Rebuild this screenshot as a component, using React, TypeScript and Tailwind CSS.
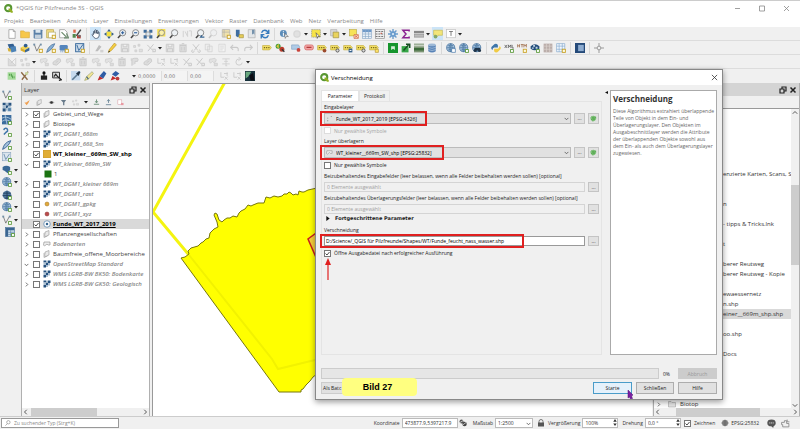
import type { ReactNode } from "react";

const badge = <rect x="10" y="10" width="5" height="5" fill="#fffbe0" stroke="#c9a227" strokeWidth="1.4" />;
const greenBadge = <rect x="10.5" y="10.5" width="4.5" height="4.5" fill="#fff" stroke="#5c9a3c" strokeWidth="1.4" />;
const lens = <circle cx="9" cy="6" r="5" fill="#eef2f5" stroke="#888" strokeWidth="1.5" />;
const handle = <path d="M5.5 10L1.5 14.5" stroke="#444" strokeWidth="2.4" />;
const nodes = (
  <>
    <path d="M2 2L6 13L12 2" fill="none" stroke="#777" strokeWidth="1.4" />
    <rect x="0.5" y="1" width="3" height="3" fill="#7390a8" />
    <rect x="11" y="1" width="3" height="3" fill="#7390a8" />
  </>
);
const globe = (
  <>
    <circle cx="7.5" cy="7.5" r="6.5" fill="#a9c4de" stroke="#44729d" strokeWidth="1.2" />
    <path d="M1 7.5H14M7.5 1V14M3 3.5Q7.5 6 12 3.5M3 11.5Q7.5 9 12 11.5M7.5 1Q2.5 7.5 7.5 14Q12.5 7.5 7.5 1" fill="none" stroke="#44729d" />
  </>
);
const tag = (
  <>
    <path d="M1 4H12L15 7.5L12 11H1Z" fill="#f2df63" stroke="#c2aa3b" />
    <path d="M3 7.5H5M6.5 7.5H8.5M10 7.5H12" stroke="#77671c" strokeWidth="2" />
  </>
);
const raster = (
  <>
    <path d="M1 1h5v4h-5zM10 1h5v5h-5zM6 5h4v5h-4zM1 10h5v5h-5z" fill="#27527f" />
    <path d="M6 1h4v4h-4zM1 5h5v5h-5zM10 6h4v5h-4zM6 10h4v4h-4z" fill="#a8bdd0" />
  </>
);

const icons: Record<string, ReactNode> = {
  file: <path d="M3 1H10L13 4V15H3ZM10 1V4H13" fill="#fff" stroke="#888" />,
  folder: <path d="M1 3H6L8 5H15V14H1Z" fill="#f7c74a" stroke="#d9a62e" />,
  save: <><rect x="1" y="1" width="14" height="14" rx="1" fill="#5a80a8" /><rect x="4" y="1" width="8" height="5" fill="#dce6ee" /><rect x="3" y="9" width="10" height="6" fill="#c3d0dc" /></>,
  layoutNew: <><path d="M1 1H12V14H1Z" fill="#f1dc85" stroke="#b69d3b" /><path d="M4 5H15V14H4Z" fill="#fff" stroke="#a8a25f" />{badge}</>,
  layoutManage: <><path d="M1 1H9L13 5V14H1Z" fill="#fff" stroke="#888" /><path d="M4 5L12 13M12 7L15 14L8 14" stroke="#6d8c6e" strokeWidth="2" fill="none" /></>,
  style: <><path d="M2 1H6V6H2Z" fill="#dd6b4d" /><path d="M14 1L7 11" stroke="#444" strokeWidth="2.4" /><path d="M1 8H6V14H1Z" fill="#53884d" /><path d="M8 10H14V15H8Z" fill="#b6413a" /><circle cx="12" cy="11" r="2" fill="#6d6d6d" /></>,
  hand: <path d="M4 9V4Q5 2.500 6 4V7V2Q7.500 .5 8.500 2V7V2.500Q10 1 11 3V8V5Q13 4 13 6V11Q12 15 9 15H7Q5 15 1.500 9Q2 7.500 4 9Z" fill="#fff" stroke="#30445c" strokeWidth="1.2" />,
  panSel: <><path d="M4 4h8v8H4z" fill="#f4e13f" /><path d="M8 0l3 4H5zM8 16l3-4H5zM0 8l4-3v6zM16 8l-4-3v6z" fill="#365f88" /></>,
  zoomIn: <>{lens}{handle}<path d="M9 3.500V8.500M6.500 6H11.500" stroke="#2e5f9b" strokeWidth="1.800" /></>,
  zoomOut: <>{lens}{handle}<path d="M6.500 6H11.500" stroke="#2e5f9b" strokeWidth="1.800" /></>,
  zoomFull: <><path d="M1 1h5v5H1zM10 1h5v5h-5zM1 10h5v5H1zM10 10h5v5h-5z" fill="#3e6c9c" /><circle cx="8" cy="8" r="3.500" fill="#dbe6ef" stroke="#777" /></>,
  zoomSel: <><rect x="2" y="0" width="13" height="12" fill="#f5df4d" /><circle cx="9" cy="6" r="4.500" fill="#faf0a8" stroke="#888" strokeWidth="1.400" />{handle}</>,
  zoomLayer: <>{lens}{handle}</>,
  dimZoom: <g opacity=".25">{lens}{handle}</g>,
  dimNative: <path d="M2 3V13M5 4L9 12V3M11 3H15V12" fill="none" stroke="#d2d2d2" strokeWidth="1.600" />,
  zoomLast: <>{lens}{handle}<path d="M15 13H9L11 10" fill="none" stroke="#376592" strokeWidth="2" /></>,
  mapNew: <><path d="M2 1H14V13H2Z" fill="#f0e2ae" stroke="#aaa" /><path d="M5 1V13M2 5H14" stroke="#aaa" />{badge}</>,
  map3d: <><path d="M3 1H9V11L6 13L3 11Z" fill="#3f6da0" /><path d="M8 9H15V14H8Z" fill="#e5cd58" stroke="#a38e33" /></>,
  bookmark: <><path d="M2 1H13V14H2Z" fill="#e3e6e8" stroke="#aaa" /><path d="M8 1H12V9L10 7L8 9Z" fill="#7693ad" /></>,
  refresh: <path d="M13.500 7Q12 2 7.500 2Q4 2 2.500 6M14 1V7H9M2.500 9Q4 14 8.500 14Q12 14 13.500 10M2 15V9H7" fill="none" stroke="#377bbd" strokeWidth="2.200" />,
  identify: <><circle cx="7" cy="7" r="5.500" fill="#5b8cb9" /><path d="M7 3V4.500M7 6V11" stroke="#fff" strokeWidth="1.600" /><path d="M9 7L15 12L11.500 12L10 15Z" fill="#fff" stroke="#666" /></>,
  dimGear: <g opacity=".2"><circle cx="8" cy="8" r="5" fill="#aaa" stroke="#777" strokeWidth="2" /></g>,
  select: <><rect x="1" y="1" width="14" height="12" fill="#f7e448" stroke="#888" strokeDasharray="2 1" /><path d="M8 6L14 12L11 12L10 15Z" fill="#fff" stroke="#444" /></>,
  selectForm: <><path d="M1 1H11V11H1Z" fill="#d8d8d8" stroke="#aaa" /><path d="M5 5H14V14H5Z" fill="#e9d35d" stroke="#998a3c" /></>,
  deselect: <><rect x="1" y="1" width="11" height="10" fill="#f7e258" stroke="#b9a93d" /><path d="M8 9H15V15H8Z" fill="#fbe0ce" stroke="#cd5d38" /><path d="M9 10L14 14M14 10L9 14" stroke="#d04b2d" /></>,
  table: <><rect x="1" y="1" width="14" height="14" fill="#e9f1f8" stroke="#89a8c7" /><rect x="1" y="1" width="14" height="4" fill="#6e9aca" /><path d="M1 8H15M1 12H15M5.500 1V15M10.500 1V15" stroke="#89a8c7" /></>,
  tableGreen: <><rect x="1" y="1" width="14" height="14" fill="#c9dbea" stroke="#4a7299" /><path d="M1 1H15V5H5V15H1Z" fill="#3b6691" /><path d="M5 8.500H15M5 12H15M9 5V15" stroke="#5b84aa" />{greenBadge}</>,
  calc: <><rect x="1" y="1" width="14" height="14" fill="#eee" stroke="#888" /><path d="M1 4H15M1 8H15M1 12H15" stroke="#777" strokeDasharray="3 1.500" strokeWidth="1.600" /><path d="M9 6h2v2H9z" fill="#c54" /></>,
  gear: <><path d="M8 0V16M0 8H16M2.500 2.500L13.500 13.500M13.500 2.500L2.500 13.500" stroke="#6a9ccd" strokeWidth="2.200" /><circle cx="8" cy="8" r="4.500" fill="#6a9ccd" /><circle cx="8" cy="8" r="1.800" fill="#dceaf5" /></>,
  sigma: <path d="M13 4V2H3L8 8L3 14H13V12" fill="none" stroke="#8b2391" strokeWidth="2.400" />,
  ruler: <><rect x="0" y="3" width="16" height="4" fill="#888" /><rect x="0" y="9" width="16" height="4" fill="#bbb" stroke="#888" /></>,
  tip: <><path d="M1 2H15V10H8L5 14V10H1Z" fill="#f3e57a" stroke="#c6b54b" /><circle cx="4" cy="12" r="3" fill="#84a869" /></>,
  text: <><rect x="1" y="1" width="14" height="13" fill="#fff" stroke="#bbb" /><path d="M5 4H11M8 4V11" stroke="#777" strokeWidth="1.500" /></>,
  source: <><path d="M1 2L10 1L14 9L5 12Z" fill="#325f91" /><path d="M5 6L14 5L15 13L7 15Z" fill="#4c82b6" /><path d="M1 8L6 9V14L2 13Z" fill="#d8b23b" /></>,
  gpkg: <><path d="M1 7L8 4L15 7L8 11Z" fill="#f5d650" /><path d="M1 7L8 11V15L1 12Z" fill="#d9ae2c" /><path d="M8 11L15 7V12L8 15Z" fill="#3a6795" /><circle cx="9" cy="4" r="3" fill="#2f5c8e" /></>,
  shp: <>{nodes}{badge}</>,
  shpGreen: <>{nodes}{greenBadge}</>,
  feather: <><path d="M1 15Q3 4 14 1Q11 10 1 15" fill="#85aed3" stroke="#315f90" />{badge}</>,
  featherDark: <><path d="M1 15Q3 4 14 1Q11 10 1 15" fill="#a3c1dc" stroke="#315f90" strokeWidth="1.400" />{greenBadge}</>,
  memory: <><rect x="1" y="3" width="13" height="9" rx="2" fill="#5485bd" /><path d="M3 12V15M6 12V15M9 12V15" stroke="#5485bd" />{badge}</>,
  mesh: <><rect x="1" y="1" width="13" height="13" fill="#cddceb" stroke="#396a9c" strokeWidth="1.500" /><path d="M3 3L6 12L13 2" stroke="#396a9c" fill="none" strokeWidth="1.500" />{badge}</>,
  meshLight: <><rect x="1" y="1" width="13" height="13" fill="#dbe5ee" stroke="#8aa5be" /><path d="M3 3L6 12L12 3" stroke="#6c8fb0" fill="none" strokeWidth="1.400" />{greenBadge}</>,
  pencilDim: <><path d="M2 13L8 3L12 6L6 13Z" fill="#bdbdbd" /><path d="M10 11H15V15H10Z" fill="#d2d2d2" /></>,
  pencil: <><path d="M2 15L4 10L12 0L15 3L7 12Z" fill="#f5cf42" stroke="#b78e25" /><path d="M2 15L3 12L5 14Z" fill="#333" /></>,
  dimSave: <path d="M2 2H14V14H2ZM5 2V6H11V2M4 14V9H12V14" fill="#e3e3e3" stroke="#c8c8c8" strokeWidth="1.400" />,
  dimPoints: <path d="M1 4H4V7H1ZM8 2H11V5H8ZM3 11H6V14H3ZM10 10H15V14H10Z" fill="#e0e0e0" stroke="#c8c8c8" />,
  dimTool: <path d="M2 3L13 14M12 2L3 13M10 10H15V14H10" fill="none" stroke="#c9c9c9" strokeWidth="1.600" />,
  dimTrash: <path d="M3 4H13V14H3ZM2 3H14M6 1H10M6 6V12M10 6V12" fill="#dedede" stroke="#c8c8c8" strokeWidth="1.400" />,
  dimCut: <path d="M3 2L11 12M13 2L5 12M3 11A2 2 0 1 0 5 13M11 13A2 2 0 1 0 13 11" fill="none" stroke="#c8c8c8" strokeWidth="1.500" />,
  dimCopy: <path d="M2 2H9V11H2ZM6 5H13V14H6Z" fill="#eee" stroke="#ccc" />,
  dimPaste: <path d="M3 2H13V14H3ZM5 5H11M5 8H11M5 11H9" fill="#f4f4f4" stroke="#ccc" />,
  undo: <path d="M5 3L1 7L5 11M1 7H10Q14 7 13 13" fill="none" stroke="#c9c9c9" strokeWidth="1.800" />,
  redo: <path d="M11 3L15 7L11 11M15 7H6Q2 7 3 13" fill="none" stroke="#c9c9c9" strokeWidth="1.800" />,
  dimMesh: <path d="M2 2V14H14L2 2M14 2V14M14 2L6 10" fill="#ddd" stroke="#ccc" strokeWidth="1.300" />,
  dimShape: <><path d="M2 7Q1 2 6 3L11 2Q15 4 12 8Q8 10 7 7L4 10Z" fill="#e2e2e2" stroke="#c8c8c8" /><path d="M10 10H15V14H10Z" fill="#ddd" stroke="#c8c8c8" /></>,
  dimRing: <path d="M2 12Q0 7 6 6Q8 1 13 3Q16 7 11 10Q8 15 2 12ZM6 9L10 6" fill="#ddd" stroke="#c8c8c8" strokeWidth="1.300" />,
  dimCurve: <path d="M3 14V5Q3 2 7 2H12Q14 4 12 7H8V11M2 2V6" fill="#ddd" stroke="#c9c9c9" strokeWidth="1.400" />,
  dimSplit: <path d="M3 2V10H8M13 2V8M8 4H14M9 9L14 14M14 9L9 14" fill="none" stroke="#cccccc" strokeWidth="1.500" />,
  dimAlign: <path d="M2 3H14M5 7H11M2 11H14M7 14H10M8 3V14" stroke="#d0d0d0" strokeWidth="1.400" />,
  dimRotate: <path d="M13 9Q13 13 8 13Q3 13 3 8Q3 3 9 3M7 0L11 3L7 6" fill="none" stroke="#cfcfcf" strokeWidth="1.600" />,
  label: tag,
  labelPin: <>{tag}<circle cx="12" cy="12" r="3" fill="#9c4b2d" /></>,
  labelMove: <>{tag}<path d="M9 9H15V15H9Z" fill="#37628d" /><path d="M10.500 12H13.500" stroke="#fff" strokeWidth="1.500" /></>,
  labelRot: <>{tag}<circle cx="12" cy="12" r="2.500" fill="#ddd" stroke="#555" strokeWidth="1.500" /></>,
  labelNew: <>{tag}<path d="M10 10h5v5h-5z" fill="#ffe36b" stroke="#ad8e28" /></>,
  diagram: <><circle cx="5" cy="5" r="4" fill="#3e9a3c" /><circle cx="11" cy="10" r="4" fill="#bb3d2b" /><path d="M2 5L6 9V1Z" fill="#e5c73d" /><path d="M11 10L15 14" stroke="#333" strokeWidth="2" /></>,
  labelBlue: <><path d="M1 3H12L14 7L12 10H1Z" fill="#b0cbe6" stroke="#7d9fc2" /><circle cx="12" cy="11" r="3" fill="#c9443b" /></>,
  labelRed: <><rect x="1" y="3" width="14" height="8" rx="3" fill="#f2a3a3" stroke="#d05c5c" /><path d="M4 7H12" stroke="#b33c3c" strokeWidth="2" /></>,
  green: <><rect x="0" y="0" width="16" height="16" fill="#16952d" /><path d="M5 5H11V11L8 9L5 11Z" fill="#d6efd8" /></>,
  greenUp: <><path d="M1 5H12V15H1Z" fill="#35a546" /><path d="M4 12L12 3M8 2H14V8" fill="none" stroke="#174f23" strokeWidth="2.400" /></>,
  terrain: <><rect x="0" y="1" width="16" height="14" fill="#7d9575" /><path d="M0 4H16" stroke="#c9d2c4" strokeWidth="3" /><path d="M0 10H16" stroke="#3d6b3b" strokeWidth="4" /></>,
  db: <><path d="M2 3V13Q8 17 14 13V3" fill="#5883b7" /><ellipse cx="8" cy="3" rx="6" ry="2.300" fill="#9db8d6" /><path d="M2 7Q8 10 14 7M2 10.500Q8 13.500 14 10.500" fill="none" stroke="#bdd0e5" /></>,
  globe: <>{globe}{greenBadge}</>,
  globeBlue: <>{globe}<path d="M9 9H15V15H9Z" fill="#fff" stroke="#386da3" /></>,
  globeFind: <>{globe}<circle cx="5" cy="12" r="2.500" fill="#203549" /><circle cx="12" cy="12" r="2.500" fill="#203549" /><path d="M4 8H13V12H4Z" fill="#203549" /></>,
  globeDark: <><circle cx="8" cy="8" r="7" fill="#547ba0" /><path d="M2 5H14M1 9H15M4 13H12M8 1V15" stroke="#213f5c" strokeWidth="1.500" />{greenBadge}</>,
  python: <><path d="M4 3Q8 -1 11 3V7H5Q2 8 3 11Q-1 10 1 6Z" fill="#3e76aa" /><path d="M12 13Q8 17 5 13V9H11Q14 8 13 5Q17 6 15 10Z" fill="#f0cb45" /></>,
  xml: <><path d="M1 3L5 8M5 3L1 8M7 8V3L9 6L11 3V8M13 3V8H16" fill="none" stroke="#555" strokeWidth="1.200" />{greenBadge}</>,
  html: <><path d="M1 2V7M4 2V7M1 4.500H4M6 2.500H10M8 2V7M11 7V2L13 5L15 2V7" fill="none" stroke="#9c6a45" strokeWidth="1.200" />{badge}</>,
  checker: <><path d="M1 5Q8 -1 15 5V9Q8 14 1 9Z" fill="#234d7a" /><path d="M5 3H8V6H5ZM9 6H12V9H9ZM3 7H6V9H3Z" fill="#bfd2e4" />{greenBadge}</>,
  gridGrey: <><rect x="1" y="1" width="14" height="14" fill="#bbaeaa" /><path d="M1 5H15M1 10H15M5.500 1V15M10.500 1V15" stroke="#ddd5d1" /></>,
  gridBlue: <><path d="M1 1H14V14H1ZM1 5H14M1 10H14M5 1V14M10 1V14" fill="#f4f9ff" stroke="#7da3ca" />{badge}</>,
  book: <><rect x="0" y="0" width="16" height="16" fill="#254a79" /><rect x="5" y="3" width="9" height="10" fill="#8eacd0" /></>,
  target: <path d="M0 8H5M11 8H16M8 0V5M8 11V16M8 5A3 3 0 1 0 8 11A3 3 0 1 0 8 5" fill="none" stroke="#9b9b9b" strokeWidth="1.600" />,
  plugin: <><path d="M1 2H14V14H1Z" fill="#a7dc9c" /><path d="M3 6H8V10H12" fill="none" stroke="#5ba553" strokeWidth="3" strokeDasharray="2 1" /></>,
  brushes: <><path d="M2 2L12 14M13 1L3 14" stroke="#8d6a46" strokeWidth="2.200" /><path d="M8 2H13V6H8Z" fill="#cbd8a2" /></>,
  weight: <><circle cx="8" cy="3" r="2.500" fill="#111" /><path d="M7 4H9V7H13V14H3V7H7Z" fill="#222" /></>,
  photo: <><path d="M1 2H12V11H1Z" fill="#ddd" stroke="#333" strokeWidth="1.600" /><path d="M3 9L6 5L9 9M8 8L15 14L11 15" stroke="#222" strokeWidth="1.800" fill="none" /></>,
  dropper: <><rect x="0" y="0" width="15" height="15" fill="#c5d9ed" /><path d="M2 14L10 6" stroke="#5b7891" strokeWidth="2.600" /><path d="M8 4L12 8L15 2L13 0Z" fill="#203142" /></>,
  marker: <><path d="M1 15L4 9L13 1L15 4L7 13Z" fill="#f1e594" stroke="#9c9f68" /><path d="M4 9L7 13" stroke="#47667f" strokeWidth="2" /></>,
  redpen: <><path d="M1 15L4 8L10 12Z" fill="#c12b2b" /><path d="M4 8L11 0L15 4L10 12Z" fill="#2f5da6" /></>,
  redpen2: <><path d="M1 15L4 8L10 12Z" fill="#c12b2b" /><path d="M3 5L9 0L15 4L9 9Z" fill="#2f5da6" /><circle cx="12" cy="12" r="3" fill="#bb3b3b" /></>,
  bird: <><rect x="0" y="0" width="16" height="16" fill="#17313b" /><path d="M1 1H10L5 9L1 12Z" fill="#68a77e" /><path d="M7 7L13 3L15 15H9Z" fill="#0b0d13" /></>,
  raster,
  rasterBlue: <>{raster}<path d="M9 9h6v6H9z" fill="#5480a8" stroke="#d6e3ee" /></>,
  meshBlue: <><rect x="0" y="0" width="15" height="15" fill="#3c6d9e" /><path d="M0 5Q7 1 15 7M0 10Q8 5 15 12M5 0L8 15" stroke="#bdd1e3" fill="none" strokeWidth="1.300" />{greenBadge}</>,
  comma: <><path d="M3 5A3 3 0 1 1 7 8L3 12" fill="none" stroke="#3f75a9" strokeWidth="2.400" />{greenBadge}</>,
  dbBlue: <><path d="M1 3Q7 -1 13 3V8L9 13L4 9L1 8Z" fill="#396895" />{greenBadge}</>,
  open: <path d="M1 8H5L13 2L10 9L6 14Z" fill="#efa052" />,
  group: <path d="M4 4L12 1V10L4 13ZM2 6V15L9 12" fill="#e9e9e9" stroke="#999" strokeWidth="1.200" />,
  eye: <><path d="M1 8Q8 1 15 8Q8 14 1 8" fill="#aaa" /><circle cx="8" cy="8" r="3" fill="#333" /></>,
  filter: <path d="M2 2H14L10 8V14H7V8Z" fill="#697b8b" />,
  expand: <path d="M8 1V8M5 5L8 9L11 5M2 12H14" fill="none" stroke="#668c74" strokeWidth="2" />,
  collapse: <path d="M8 9V2M5 5L8 1L11 5M2 13H14" fill="none" stroke="#6c8798" strokeWidth="2" />,
  remove: <><rect x="2" y="2" width="9" height="10" fill="#fff" stroke="#d48a93" /><rect x="9" y="9" width="6" height="5" fill="#e99aa3" /></>,
  polygon: <path d="M2 4H14V10H10L8 8L3 12L1 10Z" fill="#eee" stroke="#888" strokeWidth="1.200" />,
  yellowBox: <rect x="0" y="0" width="16" height="16" fill="#e0ad35" stroke="#b98c25" />,
  greenBox: <rect x="1" y="1" width="14" height="14" fill="#1b7312" />,
  orangeDot: <circle cx="8" cy="8" r="4" fill="#e1a93a" stroke="#9b7124" />,
  redDot: <circle cx="8" cy="8" r="4" fill="#bb4a4a" stroke="#873232" />,
  pointRing: <><circle cx="8" cy="8" r="6.500" fill="#fff" stroke="#4d7ca8" strokeWidth="1.400" /><circle cx="8" cy="8" r="2.500" fill="#35648f" /></>,
  points: <path d="M3 6h2v2H3zM3 12h2v2H3zM11 2h2v2h-2z" fill="#777" />,
  cycle: <><path d="M1 6Q3 1 9 2L14 4V9L11 13L6 15L2 11Z" fill="#5fae59" /><path d="M4 9A4 4 0 0 1 11 5M12 7A4 4 0 0 1 5 11" fill="none" stroke="#a5d69f" strokeWidth="1.200" /></>,
  mouse: <><circle cx="5" cy="5" r="4" fill="#555" /><circle cx="11" cy="10" r="4.500" fill="#444" /><path d="M2 7L10 2M6 13L14 7" stroke="#eee" strokeWidth="1.400" /></>,
  lock: <><path d="M4 8V5Q4 1 8 1Q12 1 12 5V8" fill="none" stroke="#777" strokeWidth="2" /><rect x="2" y="7" width="12" height="8" fill="#555" /></>,
  crs: <><circle cx="8" cy="8" r="6" fill="#888" /><path d="M0 8H16M8 1V15M3 4H13M3 12H13" stroke="#555" /></>,
  bubble: <><ellipse cx="8" cy="7" rx="7.500" ry="6" fill="#555" /><path d="M7 12L11 16L12 11Z" fill="#555" /><path d="M4 7H12" stroke="#ddd" strokeWidth="1.600" strokeDasharray="2 1" /></>,
  plug: <path d="M1 6H6V3H10V8H14V14H3V10H1ZM11 1V5H15" fill="none" stroke="#888" strokeWidth="1.500" />,
  search: <><circle cx="9" cy="6" r="4.500" fill="none" stroke="#777" strokeWidth="1.500" /><path d="M6 10L1 15" stroke="#777" strokeWidth="1.500" /></>,
  folderDim: <path d="M1 3H6L8 5H15V14H1Z" fill="#e6e6e6" stroke="#999" />,
};

function Icon({ name, className = "size-[10px]" }: { name: string; className?: string }) {
  return <svg viewBox="0 0 16 16" className={`shrink-0 ${className}`}>{icons[name]}</svg>;
}

function QgisLogo() {
  return (
    <svg viewBox="0 0 16 16" className="size-[9px] shrink-0">
      <circle cx="7.500" cy="7.500" r="5.500" fill="none" stroke="#589632" strokeWidth="3.600" />
      <path d="M8 8H11L15.500 12.500V15.500H12.500L8 11Z" fill="#93b023" />
    </svg>
  );
}

// "|" draws a separator, "v" a drop-down arrow, "_" a thin spacer, a leading "*" marks a pressed tool
function Tools({ items }: { items: string }) {
  return (
    <div className="flex items-center gap-[2px]">
      {items.split(" ").map((item, i) => {
        if (item === "|") return <span key={i} className="flex h-[12px] w-1 justify-center"><span className="w-px bg-[#d8d8d8]" /></span>;
        if (item === "_") return <span key={i} className="w-px" />;
        if (item === "v") return <Arrow key={i} />;
        const pressed = item.startsWith("*");
        const name = pressed ? item.slice(1) : item;
        return (
          <button key={i} aria-label={name} className={`flex h-[13px] w-[11px] shrink-0 items-center justify-center ${pressed ? "bg-[#cce4f7]" : ""}`}>
            <Icon name={name} />
          </button>
        );
      })}
    </div>
  );
}

function Arrow() {
  return <svg viewBox="0 0 4 4" className="size-1 shrink-0"><path d="M0 1H4L2 3.500Z" fill="#222" /></svg>;
}

function Chevron({ dir, className = "size-[6px]" }: { dir: "down" | "right" | "left" | "up"; className?: string }) {
  const d = { down: "M1 3L4 6L7 3", right: "M3 1L6 4L3 7", left: "M5 1L2 4L5 7", up: "M1 5L4 2L7 5" }[dir];
  return <svg viewBox="0 0 8 8" className={`shrink-0 ${className}`}><path d={d} fill="none" stroke="#555" strokeWidth="1.300" /></svg>;
}

function Check({ label, checked, disabled }: { label?: string; checked?: boolean; disabled?: boolean }) {
  return (
    <label className={`flex items-center gap-[3px] ${disabled ? "text-[#a5a5a5]" : ""}`}>
      <span className="relative flex">
        <input type="checkbox" defaultChecked={checked} disabled={disabled} aria-label={label ?? "Sichtbar"} className="peer size-[7px] appearance-none border border-[#777] bg-white disabled:border-[#ddd]" />
        <svg viewBox="0 0 7 7" className="pointer-events-none absolute inset-0 hidden size-[7px] peer-checked:block">
          <path d="M1.500 3.500L3 5L5.500 2" fill="none" stroke="#222" strokeWidth=".8" />
        </svg>
      </span>
      {label}
    </label>
  );
}

const menu = ["Projekt", "Bearbeiten", "Ansicht", "Layer", "Einstellungen", "Erweiterungen", "Vektor", "Raster", "Datenbank", "Web", "Netz", "Verarbeitung", "Hilfe"];

const toolbars = [
  "file folder save layoutNew layoutManage style | *hand panSel zoomIn zoomOut zoomFull zoomSel zoomLayer dimNative zoomLast dimZoom mapNew map3d bookmark refresh | identify dimGear v select v selectForm v deselect table calc gear sigma ruler v *tip text v",
  "source gpkg shp feather memory _ mesh | pencilDim pencil dimSave dimPoints dimTool v dimSave dimTrash dimCut dimCopy dimPaste undo redo | label diagram _ labelBlue labelRed labelPin labelRot labelMove labelRot labelNew | green greenUp terrain db | globeBlue globe globeFind | python xml html checker gridGrey gridBlue | book | target",
  "dimMesh dimPoints v dimShape dimRing dimShape dimTrash dimShape dimShape dimTrash dimCurve dimRing dimSplit dimSplit dimTool dimTool dimShape dimAlign dimRotate v",
];

const sideTools = ["shpGreen", "rasterBlue", "meshBlue", "comma", "featherDark", "meshLight", "dbBlue v", "globe v", "globeDark", "globe v", "shpGreen v", "tableGreen"];

interface LayerRow {
  name: string;
  icon: string;
  arrow?: "right" | "down";
  checked?: boolean;
  look?: string;
  legend?: boolean;
}

const dim = "italic font-semibold text-[#888]";
const layers: LayerRow[] = [
  { name: "Gebiet_und_Wege", icon: "group", arrow: "right", checked: true },
  { name: "Biotope", icon: "group", arrow: "right" },
  { name: "WT_DGM1_668m", icon: "raster", arrow: "right", look: dim },
  { name: "WT_DGM1_668_5m", icon: "raster", arrow: "right", look: dim },
  { name: "WT_kleiner__669m_SW_shp", icon: "yellowBox", checked: true, look: "font-bold text-black" },
  { name: "WT_kleiner_669m_SW", icon: "raster", arrow: "down", look: dim },
  { name: "1", icon: "greenBox", legend: true },
  { name: "WT_DGM1_kleiner 669m", icon: "raster", arrow: "right", look: dim },
  { name: "WT_DGM1_rast", icon: "raster", look: dim },
  { name: "WT_DGM1_gpkg", icon: "orangeDot", look: dim },
  { name: "WT_DGM1_xyz", icon: "redDot", look: dim },
  { name: "Funde_WT_2017_2019", icon: "pointRing", checked: true, look: "font-bold text-black underline" },
  { name: "Pflanzengesellschaften", icon: "group", arrow: "right" },
  { name: "Bodenarten", icon: "polygon", arrow: "right", look: dim },
  { name: "Baumfreie_offene_Moorbereiche", icon: "group", arrow: "right" },
  { name: "OpenStreetMap Standard", icon: "raster", arrow: "down", look: dim },
  { name: "WMS LGRB-BW BK50: Bodenkarte", icon: "raster", arrow: "right", look: dim },
  { name: "WMS LGRB-BW GK50: Geologisch", icon: "raster", arrow: "right", look: dim },
];

const files = ["", "", "", "", "", "", "enzierte Karten, Scans, S", "", "", "n", "", "- tipps & Tricks.lnk", "", "t", "", "berer Reutweg", "berer Reutweg - Kopie", "", "ewaessernetz", "n.shp", "einer__669m_shp.shp", "", "oo.shp", "", "Docs"];

function PanelTitle({ title }: { title?: string }) {
  return (
    <div className="flex h-[13px] items-center bg-[#d4d4d4] px-[2px] text-[#333]">
      {title}
      <svg viewBox="0 0 18 8" className="ml-auto h-2 w-[18px]">
        <path d="M1 3H5V7H1ZM3 3V1H7V5H5" fill="none" stroke="#222" strokeWidth="1.200" />
        <path d="M11.500 1.500L16.500 6.500M16.500 1.500L11.500 6.500" stroke="#222" strokeWidth="1.500" />
      </svg>
    </div>
  );
}

function HScroll({ thumb }: { thumb: string }) {
  return (
    <div className="flex h-2 shrink-0 items-center bg-[#f0f0f0] px-px">
      <Chevron dir="left" />
      <div className={`h-full bg-[#cdcdcd] ${thumb}`} />
      <Chevron dir="right" className="ml-auto size-[6px]" />
    </div>
  );
}

function LayerPanel() {
  return (
    <aside className="flex w-[129px] shrink-0 flex-col border-x border-[#b0b0b0]">
      <PanelTitle title="Layer" />
      <div className="flex h-[12px] items-center gap-[5px] px-[2px]">
        <Icon name="open" className="size-[7px]" />
        <Icon name="group" className="size-[7px]" />
        <Icon name="eye" className="size-[7px]" />
        <Icon name="filter" className="size-[7px]" />
        <Icon name="dimPoints" className="size-[7px]" />
        <Arrow />
        <Icon name="expand" className="size-[7px]" />
        <Icon name="collapse" className="size-[7px]" />
        <Icon name="remove" className="size-[7px]" />
      </div>
      <div className="flex-1 overflow-hidden border-t border-[#999] bg-white">
        {layers.map((row) => (
          <div key={row.name} className={`flex h-[10px] items-center whitespace-nowrap pl-[2px] ${row.name.startsWith("Funde") ? "bg-[#d9d9d9]" : ""}`}>
            <span className="w-[9px] shrink-0">{row.arrow && <Chevron dir={row.arrow} className="size-[5px]" />}</span>
            {row.legend ? <span className="w-[11px] shrink-0" /> : <span className="w-[10px] shrink-0"><Check checked={row.checked} /></span>}
            <Icon name={row.icon} className="size-2" />
            <span className={`pl-[2px] ${row.look ?? "text-[#444]"}`}>{row.name}</span>
          </div>
        ))}
      </div>
      <HScroll thumb="ml-[2px] w-[66px]" />
    </aside>
  );
}

function MapCanvas() {
  return (
    <main className="min-w-0 flex-1 border-l border-t border-[#999] bg-white">
      <svg className="size-full">
        <path d="M72 -2L0 128L36 171" fill="none" stroke="#f4f410" strokeWidth="3" />
        <path
          d="M28 174L32 173L36 170L35 167L38 164L45 162L48 159L50 158L53 155L56 154L57 149L59 147L61 145L65 143L64 138L61 131L62 129L64 130L66 136L69 138L71 136L74 134L77 134L80 132L84 133L86 129L88 127L92 125L95 121L98 122L100 121L105 119L108 119L111 119L113 113L117 114L121 112L125 113L129 112L131 110L134 110L136 108L138 109L140 111L143 110L145 111L146 107L149 108L151 108L155 106L164 104L340 90V280L180 288L164 290L160 293L157 297L153 301L150 305L148 306V308H126Z"
          fill="#ffff00"
          stroke="#77770c"
        />
        <path d="M36 171L119 275L125 285L170 274" fill="none" stroke="#f2f200" strokeWidth="2" />
        <path d="M170 144L155 155L165 178Z" fill="#f7cf3a" stroke="#c81e1e" strokeWidth="1.500" />
      </svg>
    </main>
  );
}

function BrowserPanel() {
  return (
    <aside className="flex w-[147px] shrink-0 flex-col border-x border-[#b0b0b0]">
      <PanelTitle />
      <div className="h-[12px]" />
      <div className="flex min-h-0 flex-1 border-t border-[#999] bg-white">
        <div className="flex min-w-0 flex-1 flex-col overflow-hidden text-[#333]">
          {files.map((name, i) => (
            <div key={i} className={`flex h-[10px] shrink-0 items-center whitespace-nowrap pl-[69px] ${name.startsWith("einer") ? "bg-[#d9d9d9]" : ""}`}>{name}</div>
          ))}
          <div className="mt-auto flex h-[8px] shrink-0 items-center gap-1 pl-[2px]">
            <Chevron dir="right" className="size-[5px]" />
            <Icon name="folderDim" className="ml-[3px] size-2" />
            Biotop
          </div>
        </div>
        <div className="flex w-2 flex-col items-center bg-[#f0f0f0]">
          <Chevron dir="up" className="mt-px size-[6px]" />
          <div className="mt-[69px] h-20 w-full bg-[#cdcdcd]" />
          <Chevron dir="down" className="mt-auto size-[6px]" />
        </div>
      </div>
      <HScroll thumb="ml-[15px] w-[84px]" />
    </aside>
  );
}

const dialogButton = "flex items-center justify-center border border-[#adadad] bg-[#e1e1e1]";

function Dots() {
  return <button className={`${dialogButton} w-[11px] shrink-0 border-[#c4c4c4] leading-none`}>...</button>;
}

function LayerSelect({ id, value, icon, mark }: { id: string; value: string; icon: string; mark: string }) {
  return (
    <div className="mt-[2px] flex h-[11px] gap-[3px]">
      <div className="relative flex flex-1">
        <select id={id} className="w-full appearance-none border border-[#bbb] bg-[#e1e1e1] pl-[11px] text-black">
          <option>{value}</option>
        </select>
        <Icon name={icon} className="absolute left-[2px] top-[2px] size-[7px]" />
        <Chevron dir="down" className="absolute right-[2px] top-[3px] size-[5px]" />
        <div className={`pointer-events-none absolute -left-1 -top-[2px] h-[15px] border-2 border-[#e02020] ${mark}`} />
      </div>
      <Dots />
      <button aria-label="Iterieren" className={`${dialogButton} w-[11px] border-[#c4c4c4]`}><Icon name="cycle" className="size-[7px]" /></button>
    </div>
  );
}

function Elements({ id }: { id: string }) {
  return (
    <div className="mt-[2px] flex h-[10px] gap-[3px]">
      <input id={id} disabled defaultValue="0 Elemente ausgewählt" className="min-w-0 flex-1 border border-[#d4d4d4] bg-[#f0f0f0] px-[2px] text-[#a0a0a0]" />
      <Dots />
    </div>
  );
}

function Dialog() {
  return (
    <section role="dialog" aria-label="Verschneidung" className="absolute bottom-[29px] left-[315px] right-[77px] top-[69px] flex flex-col border border-[#888] bg-[#f0f0f0] text-[5px] font-medium leading-[8px] text-[#222] shadow-[0_2px_6px_rgba(0,0,0,0.4)]">
      <header className="flex h-[15px] shrink-0 items-center gap-[2px] bg-white px-1 text-[6px] font-normal text-black">
        <QgisLogo />
        <h1>Verschneidung</h1>
        <button aria-label="Schließen" className="ml-auto">
          <svg viewBox="0 0 8 8" className="size-[7px]"><path d="M1 1L7 7M7 1L1 7" stroke="#333" strokeWidth=".9" /></svg>
        </button>
      </header>

      <div className="flex min-h-0 flex-1 px-[5px] pt-[5px]">
        <div className="flex min-w-0 flex-1 flex-col">
          <div role="tablist" className="flex h-[11px]">
            <button role="tab" className="w-[38px] border border-b-0 border-[#e4e4e4] bg-white">Parameter</button>
            <button role="tab" className="w-[31px] border border-b-0 border-[#e4e4e4]">Protokoll</button>
          </div>
          <div className="flex-1 border border-[#e4e4e4] px-[2px] pt-px">
            <label htmlFor="input" className="block">Eingabelayer</label>
            <LayerSelect id="input" value="Funde_WT_2017_2019 [EPSG:4326]" icon="points" mark="w-[107px]" />
            <div className="my-[2px] flex h-[9px] items-center"><Check label="Nur gewählte Symbole" disabled /></div>
            <label htmlFor="overlay" className="block">Layer überlagern</label>
            <LayerSelect id="overlay" value="WT_kleiner__669m_SW_shp [EPSG:25832]" icon="polygon" mark="w-[124px]" />
            <div className="my-[2px] flex h-[10px] items-center"><Check label="Nur gewählte Symbole" /></div>
            <label htmlFor="keepIn" className="block whitespace-nowrap">Beizubehaltendes Eingabefelder (leer belassen, wenn alle Felder beibehalten werden sollen) [optional]</label>
            <Elements id="keepIn" />
            <label htmlFor="keepOver" className="mt-[2px] block whitespace-nowrap">Beizubehaltendes Überlagerungsfelder (leer belassen, wenn alle Felder beibehalten werden sollen) [optional]</label>
            <Elements id="keepOver" />
            <button className="flex items-center gap-[5px] pl-[2px] font-bold">
              <svg viewBox="0 0 4 6" className="h-[5px] w-1"><path d="M0 0L4 3L0 6Z" fill="#111" /></svg>
              <span className="font-['DejaVu_Sans',sans-serif]">Fortgeschrittene Parameter</span>
            </button>
            <label htmlFor="output" className="mt-1 block">Verschneidung</label>
            <div className="relative mt-[2px] flex h-[10px] gap-[3px]">
              <input id="output" defaultValue="D:/Science/_QGIS für Pilzfreunde/Shapes/WT/Funde_feucht_nass_wasser.shp" className="min-w-0 flex-1 border border-[#999] bg-white px-px text-black" />
              <Dots />
              <div className="pointer-events-none absolute -left-1 -top-[2px] h-[14px] w-[204px] border-2 border-[#e02020]" />
            </div>
            <div className="mt-[2px] flex h-[10px] items-center"><Check label="Öffne Ausgabedatei nach erfolgreicher Ausführung" checked /></div>
            <svg viewBox="0 0 8 22" className="h-[22px] w-2"><path d="M4 4V22" stroke="#e02020" strokeWidth="1.200" /><path d="M4 0L7 7H1Z" fill="#e02020" /></svg>
          </div>
        </div>
        <div className="flex w-2 justify-center"><svg viewBox="0 0 4 4" className="mt-px size-[3px]"><path d="M4 0V4L0 2Z" fill="#111" /></svg></div>
        <article className="w-[107px] shrink-0 border border-[#aaa] bg-white px-[2px] pt-[2px]">
          <h2 className="text-[8px] font-bold leading-[11px] text-[#333]">Verschneidung</h2>
          <p className="mt-1 whitespace-nowrap leading-[7px] text-[#666]">
            Diese Algorithmus extrahiert überlappende<br />
            Teile von Objekt in dem Ein- und<br />
            Überlagerungslayer. Den Objekten im<br />
            Ausgabeschnittlayer werden die Attribute<br />
            der überlappenden Objekte sowohl aus<br />
            dem Ein- als auch dem Überlagerungslayer<br />
            zugewiesen.
          </p>
        </article>
      </div>

      <footer className="relative px-[5px] pb-[5px] pt-[13px]">
        <div className="flex h-[11px] items-center">
          <div role="progressbar" aria-valuenow={0} className="h-full flex-1 border border-[#ccc] bg-[#e6e6e6]" />
          <span className="w-[19px] pl-1">0%</span>
          <button disabled className="h-full w-[39px] bg-[#ccc] text-[#999]">Abbruch</button>
        </div>
        <div className="mt-[3px] flex h-[12px] gap-1">
          <button className={`${dialogButton} mr-auto w-[60px] justify-start border-[#ccc] pl-px`}>Als Batc</button>
          <button className="w-[39px] border border-[#4a9cc9] bg-[#e5f1fb]">Starte</button>
          <button className={`${dialogButton} w-[38px]`}>Schließen</button>
          <button className={`${dialogButton} w-[39px]`}>Hilfe</button>
        </div>
        <div className="absolute bottom-[3px] left-[26px] flex h-[18px] w-[75px] items-center justify-center rounded-sm bg-[#ffff80] pr-1 font-['Liberation_Sans',sans-serif] text-[9px] font-bold text-black">Bild 27</div>
        <svg viewBox="0 0 7 9" className="absolute bottom-0 right-[88px] h-[9px] w-[7px]"><path d="M1 0L6 5L4.500 6L5.500 8.500L3.500 9L2.500 7L1 8Z" fill="#7b1fa2" stroke="#4a0d73" strokeWidth=".5" /></svg>
      </footer>
    </section>
  );
}

function Spin() {
  return <svg viewBox="0 0 4 8" className="absolute right-px top-px h-[7px] w-1"><path d="M0 3L2 0L4 3ZM0 5H4L2 8Z" fill="#333" /></svg>;
}

const statusField = "h-[10px] border border-[#bbb] bg-white px-[2px]";

function StatusBar() {
  return (
    <footer className="flex h-[13px] shrink-0 items-center border-t border-[#ccc] bg-[#f0f0f0] pl-px pr-[10px] text-[5px] font-medium text-[#333]">
      <div className="relative flex">
        <input aria-label="Suche" placeholder="Zu suchender Typ (Strg+K)" className="h-[10px] w-[118px] border border-[#999] bg-white pl-3 placeholder:text-[#888]" />
        <Icon name="search" className="absolute left-1 top-[2px] size-[6px]" />
      </div>
      <label htmlFor="coord" className="ml-auto mr-[2px]">Koordinate</label>
      <input id="coord" defaultValue="473877.9,5397217.9" className={`${statusField} w-14`} />
      <Icon name="mouse" className="ml-px size-2" />
      <label htmlFor="scale" className="ml-[6px] mr-[2px]">Maßstab</label>
      <div className="relative flex">
        <select id="scale" className={`${statusField} w-[38px] appearance-none`}><option>1:2500</option></select>
        <Chevron dir="down" className="absolute right-[2px] top-[3px] size-[5px]" />
      </div>
      <Icon name="lock" className="ml-1 size-2" />
      <label htmlFor="zoom" className="ml-[3px] mr-[2px]">Vergrößerung</label>
      <div className="relative flex"><input id="zoom" defaultValue="100%" className={`${statusField} w-9`} /><Spin /></div>
      <label htmlFor="rotation" className="ml-1 mr-[2px]">Drehung</label>
      <div className="relative mr-[3px] flex"><input id="rotation" defaultValue="0,0 °" className={`${statusField} w-9`} /><Spin /></div>
      <Check label="Zeichnen" checked />
      <button className="ml-[6px] flex items-center gap-[2px]"><Icon name="crs" className="size-2" />EPSG:25832</button>
      <button aria-label="Nachrichten" className="ml-2"><Icon name="bubble" className="size-[9px]" /></button>
      <button aria-label="Erweiterungen" className="ml-[5px]"><Icon name="plug" className="size-[9px]" /></button>
    </footer>
  );
}

export default function App() {
  return (
    <div className="relative flex h-screen w-full flex-col overflow-hidden bg-[#f0f0f0] font-['Open_Sans',sans-serif] text-[6px] leading-[8px]">
      <header className="border-t border-[#ccc] bg-white text-[#888]">
        <div className="flex h-[14px] items-center gap-[3px] pl-1 pr-[10px]">
          <QgisLogo />
          <span>*QGIS für Pilzfreunde 3S - QGIS</span>
          <svg viewBox="0 0 56 7" className="ml-auto h-[7px] w-14 shrink-0" fill="none" stroke="#888" strokeWidth=".8">
            <path d="M1 3.500H6M25.500 1H30.500V6H25.500ZM50 1L55 6M55 1L50 6" />
          </svg>
        </div>
        <nav className="flex h-[12px] items-center gap-[6px] pl-1">
          {menu.map((name) => <button key={name}>{name}</button>)}
        </nav>
      </header>

      <div className="flex h-[13px] items-center pl-[6px]"><Tools items={toolbars[0]} /></div>
      <div className="flex h-[14px] items-center border-t border-[#dcdcdc] pl-[6px]"><Tools items={toolbars[1]} /></div>
      <div className="flex h-[14px] items-center border-t border-[#dcdcdc] pl-[6px]"><Tools items={toolbars[2]} /></div>
      <div className="flex h-[15px] items-center border-t border-[#dcdcdc] pl-[6px]">
        <Tools items="plugin brushes | weight photo | dropper marker redpen redpen2" />
        <div className="ml-3 flex items-center gap-[2px] font-['DejaVu_Sans',sans-serif] text-[5px] text-[#777]">
          <Arrow />
          <input aria-label="Wert" defaultValue="0,0000" className="h-[10px] w-6 border-r border-[#ddd] bg-[#f4f4f4]" />
          <input aria-label="X" defaultValue="0,00" className="h-[10px] w-6 border-r border-[#ddd] bg-[#f4f4f4]" />
          <input aria-label="Y" defaultValue="0,00" className="h-[10px] w-6 border-r border-[#ddd] bg-[#f4f4f4]" />
        </div>
        <div className="ml-1"><Tools items="dimSplit dimSplit bird" /></div>
      </div>

      <div className="flex min-h-0 flex-1">
        <div className="w-[21px] shrink-0 pl-[2px] pt-[6px]">
          <div className="flex h-[149px] flex-col justify-between">
            {sideTools.map((tool, i) => {
              const [name, drop] = tool.split(" ");
              return (
                <button key={i} aria-label={name} className={`flex h-[11px] items-center gap-[2px] ${name === "tableGreen" ? "pl-[3px]" : ""}`}>
                  <Icon name={name} />
                  {drop && <Arrow />}
                </button>
              );
            })}
          </div>
        </div>
        <LayerPanel />
        <div className="w-[2px] shrink-0" />
        <MapCanvas />
        <div className="w-px shrink-0" />
        <BrowserPanel />
      </div>

      <StatusBar />
      <Dialog />
    </div>
  );
}
